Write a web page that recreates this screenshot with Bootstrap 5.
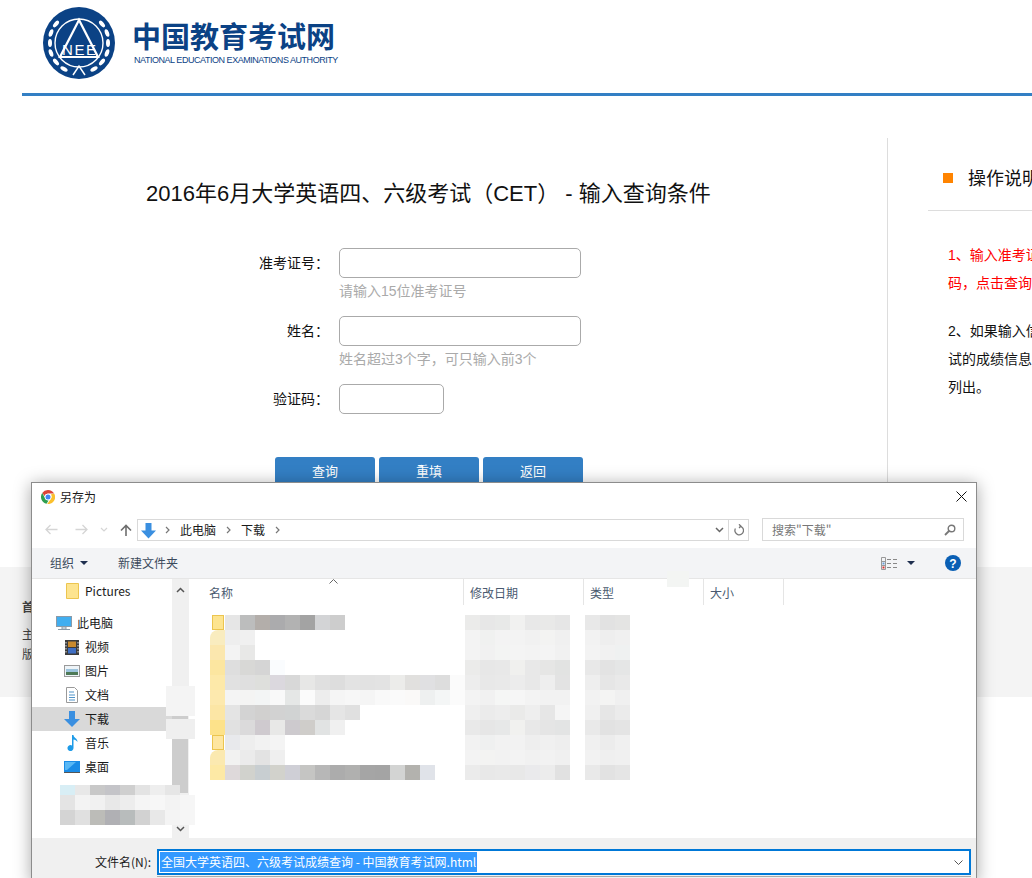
<!DOCTYPE html>
<html lang="zh-CN">
<head>
  <meta charset="UTF-8" />
  <title>全国大学英语四、六级考试成绩查询 - 中国教育考试网</title>
  <link href="https://cdn.jsdelivr.net/npm/bootstrap@5.3.3/dist/css/bootstrap.min.css" rel="stylesheet"/>
  <style>
    html, body { height: 878px; overflow: hidden; }
    body { position: relative; background: #fff; color: #111; font-family: "Liberation Sans", "Noto Sans CJK SC", sans-serif; font-size: 14px; }

    /* page behind the dialog */
    .site-head { height: 96px; margin-left: 22px; border-bottom: 3px solid #337fc4; }
    .site-logo { margin-left: 20px; padding-top: 7px; }
    .site-name { margin-left: 14px; padding-top: 20px; color: #0b4285; }
    .site-cn { font-size: 29px; line-height: 36px; font-weight: 700; white-space: nowrap; }
    .site-en { font-size: 9px; line-height: 12px; margin: -2px 0 0 2px; white-space: nowrap; letter-spacing: -.46px; }
    .site-main { margin: 42px 0 0 22px; height: 429px; }
    .query-col { width: 865px; flex: none; }
    .query-title { font-size: 22px; line-height: 32px; font-weight: 400; margin: 40px 0 38px 124px; white-space: nowrap; color: #111; }
    .query-row { height: 68px; }
    .query-label { width: 307px; flex: none; text-align: right; margin-right: 10px; line-height: 30px; }
    .query-input { display: block; width: 242px; height: 30px; border: 1px solid #aaa; border-radius: 5px; background: #fff; }
    .query-input-sm { width: 105px; }
    .query-help { color: #aaa; line-height: 20px; margin-top: 3px; white-space: nowrap; }
    .query-btns { margin: 5px 0 0 253px; gap: 4px; }
    .query-btn { width: 100px; height: 30px; padding: 0; background: #337fc4; color: #fff; border: 0; border-radius: 3px; font-size: 13px; }
    .query-btn:hover { background: #337fc4; color: #fff; }
    .help-col { width: 145px; flex: none; border-left: 1px solid #ddd; padding-left: 40px; overflow: hidden; white-space: nowrap; }
    .help-head { height: 73px; border-bottom: 1px solid #ddd; padding: 28px 0 0 15px; font-size: 18px; line-height: 26px; gap: 15px; }
    .help-mark { width: 10px; height: 10px; background: #ff8400; flex: none; margin-top: 7px; }
    .help-text { margin: 30px 0 0 20px; font-size: 14px; line-height: 28px; }
    .help-red { color: #f00; margin-bottom: 20px; }
    .site-foot { position: absolute; left: 0; right: 0; top: 567px; height: 130px; background: #f4f4f4; padding: 31px 0 0 22px; font-size: 12px; color: #444; }
    .site-foot div { line-height: 20px; }
    .foot-head { margin-bottom: 7px; }

    /* save as dialog */
    .save-dlg { position: absolute; left: 31px; top: 482px; width: 946px; height: 400px; background: #fff; border: 1px solid #8c8c8c; box-shadow: 0 2px 16px rgba(0,0,0,.35); font-family: "Noto Sans CJK SC", "Liberation Sans", sans-serif; font-size: 12px; color: #1a1a1a; }
    .dlg-title { height: 29px; padding: 0 9px 2px; gap: 5px; }
    .dlg-close { margin-left: auto; }
    .dlg-nav { height: 36px; padding: 6px 14px 7px 13px; }
    .dlg-arrows { width: 92px; height: 23px; flex: none; gap: 12px; }
    .nav-fwd { margin-left: 5px; }
    .dlg-addr { width: 612px; height: 22px; margin-top: 1px; border: 1px solid #d9d9d9; flex: none; gap: 10px; padding-left: 2px; }
    .addr-first { margin-left: -2px; }
    .dlg-addr-end { margin-left: auto; height: 100%; }
    .dlg-refresh { width: 20px; height: 100%; border-left: 1px solid #d9d9d9; }
    .dlg-search { width: 202px; height: 23px; margin-left: 13px; border: 1px solid #d9d9d9; padding: 0 7px 0 9px; color: #777; flex: none; }
    .dlg-tools { height: 31px; background: #f3f4f6; padding: 0 15px 0 18px; border-bottom: 1px solid #e6e6e6; color: #3b4a5c; }
    .tool-caret { margin-left: 6px; }
    .tool-new { margin-left: 30px; }
    .tool-view { margin-left: auto; }
    .tool-caret-end { margin: 0 30px 0 9px; }
    .dlg-body { height: 259px; }
    .dlg-side { width: 140px; flex: none; white-space: nowrap; }
    .side-item { height: 24px; gap: 5px; padding-left: 32px; }
    .side-first { margin-bottom: 8px; }
    .side-top { padding-left: 24px; }
    .side-on { background: #d9d9d9; }
    .side-ico { width: 16px; flex: none; display: flex; justify-content: center; }
    .dlg-scroll { width: 16px; flex: none; background: #f0f0f0; }
    .scroll-btn { height: 22px; }
    .scroll-btn-end { height: 18px; }
    .scroll-fill { flex: 1; }
    .scroll-gap { height: 27px; }
    .scroll-thumb { height: 80px; background: #cdcdcd; }
    .dlg-list { flex: 1; border-left: 1px solid #f0f0f0; min-width: 0; }
    .list-head { height: 26px; color: #4a5a70; }
    .list-col { height: 100%; border-right: 1px solid #e5e5e5; padding-left: 6px; line-height: 28px; flex: none; }
    .list-name { width: 275px; padding-left: 20px; }
    .list-w { width: 120px; }
    .list-w2 { width: 80px; }
    .list-sort { position: absolute; top: 0; left: 140px; }
    .list-rows { margin: 10px 0 0 21px; }
    .blur-row { height: 15px; }
    .blur-ico { width: 15px; flex: none; }
    .blur-name { width: 240px; flex: none; }
    .blur-date { width: 105px; flex: none; margin-right: 15px; }
    .blur-cell { width: 15px; height: 15px; flex: none; }
    .blur-folder { width: 12px; margin-left: 2px; border: 1px solid #ecc54f; }
    .blur-round { border-top-left-radius: 8px; }
    .dlg-bottom { height: 45px; background: #f0f0f0; padding: 11px 5px 0 63px; }
    .file-label { width: 62px; flex: none; line-height: 26px; }
    .file-box { flex: 1; height: 26px; border: 2px solid #0078d7; background: #fff; padding: 0 2px 0 1px; }
    .file-sel { background: #3399ff; color: #fff; padding: 0 1px; line-height: 20px; white-space: nowrap; }
    .file-next { height: 1px; margin: 1px 0 0 62px; background: #aaa; }
    .smudge { position: absolute; background: #f4f4f4; }
    .smudge-a { left: 134px; top: 203px; width: 29px; height: 30px; }
    .smudge-b { left: 134px; top: 236px; width: 29px; height: 20px; background: #efefef; }
    .smudge-c { left: 635px; top: 88px; width: 22px; height: 16px; background: #f3f5f3; }
    .side-blur { position: absolute; left: 28px; top: 302px; }
    .side-blur .blur-row:first-child { height: 10px; overflow: hidden; }
  </style>
</head>
<body>
  <header class="site-head d-flex">
    <div class="site-logo">
      <svg width="76" height="74" viewBox="0 0 76 74">
        <circle cx="37" cy="36" r="36" fill="#0b4285"/>
        <circle cx="37" cy="36" r="24" fill="none" stroke="#fff" stroke-width="1.4"/>
        <path d="M37 13 L18 50 H56 Z" fill="#0b4285" stroke="#fff" stroke-width="2.2"/>
        <text x="37" y="48" text-anchor="middle" fill="#fff" font-family="Liberation Sans" font-size="15" textLength="34">NEE</text>
        <path d="M31 68 L37 59 L43 68" fill="none" stroke="#fff" stroke-width="1.5"/>
        <g fill="#fff">
          <ellipse cx="8" cy="36" rx="2" ry="4"/><ellipse cx="9" cy="26" rx="2" ry="4" transform="rotate(20 9 26)"/><ellipse cx="14" cy="17" rx="2" ry="4" transform="rotate(40 14 17)"/>
          <ellipse cx="9" cy="46" rx="2" ry="4" transform="rotate(-20 9 46)"/><ellipse cx="14" cy="55" rx="2" ry="4" transform="rotate(-40 14 55)"/><ellipse cx="22" cy="62" rx="2" ry="4" transform="rotate(-60 22 62)"/>
          <ellipse cx="66" cy="36" rx="2" ry="4"/><ellipse cx="65" cy="26" rx="2" ry="4" transform="rotate(-20 65 26)"/><ellipse cx="60" cy="17" rx="2" ry="4" transform="rotate(-40 60 17)"/>
          <ellipse cx="65" cy="46" rx="2" ry="4" transform="rotate(20 65 46)"/><ellipse cx="60" cy="55" rx="2" ry="4" transform="rotate(40 60 55)"/><ellipse cx="52" cy="62" rx="2" ry="4" transform="rotate(60 52 62)"/>
        </g>
      </svg>
    </div>
    <div class="site-name">
      <div class="site-cn">中国教育考试网</div>
      <div class="site-en">NATIONAL EDUCATION EXAMINATIONS AUTHORITY</div>
    </div>
  </header>

  <main class="site-main d-flex">
    <section class="query-col">
      <h1 class="query-title">2016年6月大学英语四、六级考试（CET） - 输入查询条件</h1>
      <form>
        <div class="query-row d-flex">
          <label class="query-label">准考证号：</label>
          <div><input class="query-input" type="text"/><div class="query-help">请输入15位准考证号</div></div>
        </div>
        <div class="query-row d-flex">
          <label class="query-label">姓名：</label>
          <div><input class="query-input" type="text"/><div class="query-help">姓名超过3个字，可只输入前3个</div></div>
        </div>
        <div class="query-row d-flex">
          <label class="query-label">验证码：</label>
          <div><input class="query-input query-input-sm" type="text"/></div>
        </div>
        <div class="query-btns d-flex">
          <button type="button" class="btn query-btn">查询</button>
          <button type="button" class="btn query-btn">重填</button>
          <button type="button" class="btn query-btn">返回</button>
        </div>
      </form>
    </section>
    <aside class="help-col">
      <div class="help-head d-flex"><span class="help-mark"></span><span>操作说明</span></div>
      <div class="help-text">
        <div class="help-red">1、输入准考证<br/>码，点击查询</div>
        <div>2、如果输入信<br/>试的成绩信息<br/>列出。</div>
      </div>
    </aside>
  </main>

  <footer class="site-foot">
    <div class="fw-bold foot-head">首</div>
    <div>主</div>
    <div>版</div>
  </footer>

  <div class="save-dlg">
    <div class="dlg-title d-flex align-items-center">
      <svg width="14" height="14" viewBox="0 0 14 14">
        <path d="M7 0a7 7 0 0 1 6.100 3.500H7A3.500 3.500 0 0 0 3.600 6L1.200 3A7 7 0 0 1 7 0z" fill="#db4437"/>
        <path d="M1.200 3L4 7.900a3.500 3.500 0 0 0 3.600 2.500L5.500 13.800A7 7 0 0 1 1.200 3z" fill="#2e9e4f"/>
        <path d="M13.100 3.500A7 7 0 0 1 6.200 14L9.900 8.800A3.500 3.500 0 0 0 9.800 4.500z" fill="#fbc02d"/>
        <circle cx="7" cy="7" r="3.300" fill="#fff"/><circle cx="7" cy="7" r="2.500" fill="#4285f4"/>
      </svg>
      <span>另存为</span>
      <svg class="dlg-close" width="11" height="11" viewBox="0 0 11 11"><path d="M.5.500l10 10M10.500.5l-10 10" stroke="#111" stroke-width="1" fill="none"/></svg>
    </div>

    <div class="dlg-nav d-flex align-items-start">
      <div class="dlg-arrows d-flex align-items-center">
        <svg width="13" height="11" viewBox="0 0 13 11"><path d="M12.500 5.500H1M5.500 1L1 5.500l4.500 4.500" stroke="#d5d5d5" stroke-width="1.300" fill="none"/></svg>
        <svg width="13" height="11" viewBox="0 0 13 11" class="nav-fwd"><path d="M.5 5.500H12M7.500 1L12 5.500 7.500 10" stroke="#d5d5d5" stroke-width="1.300" fill="none"/></svg>
        <svg width="8" height="5" viewBox="0 0 8 5"><path d="M1 1l3 3 3-3" stroke="#d5d5d5" stroke-width="1.200" fill="none"/></svg>
        <svg width="12" height="12" viewBox="0 0 12 12"><path d="M6 12V1.500M1 6.500l5-5 5 5" stroke="#6e6e6e" stroke-width="1.600" fill="none"/></svg>
      </div>
      <div class="dlg-addr d-flex align-items-center">
        <svg width="17" height="17" viewBox="0 0 17 17"><path d="M5.500 1h6v7.500H16L8.500 16.500 1 8.500h4.500z" fill="#3a8fe0"/></svg>
        <svg width="5" height="8" viewBox="0 0 5 8" class="addr-first"><path d="M1 1l3 3-3 3" stroke="#777" stroke-width="1.200" fill="none"/></svg>
        <span>此电脑</span>
        <svg width="5" height="8" viewBox="0 0 5 8"><path d="M1 1l3 3-3 3" stroke="#777" stroke-width="1.200" fill="none"/></svg>
        <span>下载</span>
        <svg width="5" height="8" viewBox="0 0 5 8"><path d="M1 1l3 3-3 3" stroke="#777" stroke-width="1.200" fill="none"/></svg>
        <div class="dlg-addr-end d-flex align-items-center">
          <svg width="9" height="6" viewBox="0 0 9 6" class="me-1"><path d="M1 1l3.500 3.500L8 1" stroke="#666" stroke-width="1.500" fill="none"/></svg>
          <div class="dlg-refresh d-flex align-items-center justify-content-center">
            <svg width="11" height="12" viewBox="0 0 11 12"><path d="M6.500 2.200A4.300 4.300 0 1 1 2.400 4.500M6 .3L8 2.300 6 4" stroke="#777" stroke-width="1.300" fill="none"/></svg>
          </div>
        </div>
      </div>
      <div class="dlg-search d-flex align-items-center justify-content-between">
        <span>搜索"下载"</span>
        <svg width="12" height="12" viewBox="0 0 12 12"><circle cx="7.500" cy="4.500" r="3.300" stroke="#777" stroke-width="1.400" fill="none"/><path d="M5 7L1 11" stroke="#777" stroke-width="1.800"/></svg>
      </div>
    </div>

    <div class="dlg-tools d-flex align-items-center">
      <span>组织</span>
      <svg width="8" height="4" viewBox="0 0 8 4" class="tool-caret"><path d="M0 0h8L4 4z" fill="#1f2f4f"/></svg>
      <span class="tool-new">新建文件夹</span>
      <svg width="17" height="13" viewBox="0 0 17 13" class="tool-view"><path d="M.5.500h4v12h-4zM.5 4.500h4M.5 8.500h4" stroke="#999" fill="none"/><path d="M6 2.500h4M12 2.500h4M6 6.500h4M12 6.500h4M6 10.500h4M12 10.500h4" stroke="#888"/><rect x="1.500" y="9.500" width="2" height="2" fill="#d33"/><rect x="1.500" y="5.500" width="2" height="2" fill="#6b9ed8"/></svg>
      <svg width="8" height="4" viewBox="0 0 8 4" class="tool-caret-end"><path d="M0 0h8L4 4z" fill="#1f2f4f"/></svg>
      <svg width="16" height="16" viewBox="0 0 16 16"><circle cx="8" cy="8" r="8" fill="#0a5fb4"/><text x="8" y="12.500" text-anchor="middle" fill="#fff" font-family="Liberation Sans" font-size="12" font-weight="700">?</text></svg>
    </div>

    <div class="dlg-body d-flex">
      <nav class="dlg-side">
        <div class="side-item side-first d-flex align-items-center">
          <span class="side-ico"><svg width="13" height="16" viewBox="0 0 13 16"><path d="M.5.500h12v15H.5z" fill="#fde48f" stroke="#ecc54f"/></svg></span><span>Pictures</span>
        </div>
        <div class="side-item side-top d-flex align-items-center">
          <span class="side-ico"><svg width="16" height="15" viewBox="0 0 16 15"><rect x=".5" y=".5" width="15" height="10" fill="#41aef0" stroke="#8a9aa8"/><path d="M6 11h4v2H6zM2 13.500h12" stroke="#8a9aa8" fill="none"/></svg></span><span>此电脑</span>
        </div>
        <div class="side-item d-flex align-items-center">
          <span class="side-ico"><svg width="14" height="15" viewBox="0 0 14 15"><rect width="14" height="15" fill="#3c3c3c"/><rect x="3" y="1.500" width="8" height="5.500" fill="#c98a2e"/><rect x="3" y="8" width="8" height="5.500" fill="#3f6fc4"/><path d="M1 2v11M13 2v11" stroke="#ddd" stroke-dasharray="1.500 1.500"/></svg></span><span>视频</span>
        </div>
        <div class="side-item d-flex align-items-center">
          <span class="side-ico"><svg width="16" height="12" viewBox="0 0 16 12"><rect x=".5" y=".5" width="15" height="11" fill="#eef4f8" stroke="#9a9a9a"/><path d="M2 4h12v3H2z" fill="#9cc4dd"/><path d="M2 7h12v3H2z" fill="#4e7a57"/></svg></span><span>图片</span>
        </div>
        <div class="side-item d-flex align-items-center">
          <span class="side-ico"><svg width="12" height="16" viewBox="0 0 12 16"><path d="M.5.500h8l3 3v12H.5z" fill="#fff" stroke="#9a9a9a"/><path d="M3 5h5M3 8h6M3 10.500h6M3 13h6" stroke="#4f93c9"/></svg></span><span>文档</span>
        </div>
        <div class="side-item side-on d-flex align-items-center">
          <span class="side-ico"><svg width="16" height="16" viewBox="0 0 16 16"><path d="M5 0h6v8h5l-8 8-8-8h5z" fill="#3a8fe0"/></svg></span><span>下载</span>
        </div>
        <div class="side-item d-flex align-items-center">
          <span class="side-ico"><svg width="12" height="16" viewBox="0 0 12 16"><path d="M6 0h1.500c0 3 4 3 4 7-1-1.500-2.500-2.500-4-2.500V13a3 3 0 1 1-1.500-2.500z" fill="#1e9be8"/></svg></span><span>音乐</span>
        </div>
        <div class="side-item d-flex align-items-center">
          <span class="side-ico"><svg width="16" height="12" viewBox="0 0 16 12"><rect width="16" height="12" fill="#1b8ce6"/><path d="M1 1h11L3 9H1z" fill="#59b8f5"/><path d="M0 11h16v1H0z" fill="#555"/></svg></span><span>桌面</span>
        </div>
      </nav>
      <div class="dlg-scroll d-flex flex-column">
        <div class="scroll-btn d-flex align-items-center justify-content-center"><svg width="9" height="6" viewBox="0 0 9 6"><path d="M1 5l3.500-3.500L8 5" stroke="#555" stroke-width="1.500" fill="none"/></svg></div>
        <div class="scroll-fill"></div>
        <div class="scroll-thumb"></div>
        <div class="scroll-gap"></div>
        <div class="scroll-btn-end d-flex align-items-center justify-content-center"><svg width="9" height="6" viewBox="0 0 9 6"><path d="M1 1l3.500 3.500L8 1" stroke="#555" stroke-width="1.500" fill="none"/></svg></div>
      </div>
      <div class="dlg-list position-relative">
        <div class="list-head d-flex">
          <div class="list-col list-name">名称</div>
          <div class="list-col list-w">修改日期</div>
          <div class="list-col list-w">类型</div>
          <div class="list-col list-w2">大小</div>
        </div>
        <svg width="9" height="5" viewBox="0 0 9 5" class="list-sort"><path d="M.5 4.500L4.500 .5l4 4" stroke="#666" fill="none"/></svg>
        <div class="list-rows" id="blurRows"></div>
      </div>
    </div>

    <div class="dlg-bottom">
      <div class="d-flex">
        <div class="file-label">文件名(N):</div>
        <div class="file-box d-flex align-items-center justify-content-between">
          <span class="file-sel">全国大学英语四、六级考试成绩查询 - 中国教育考试网.html</span>
          <svg width="9" height="5" viewBox="0 0 9 5" class="me-1"><path d="M.5.500l4 4 4-4" stroke="#555" fill="none"/></svg>
        </div>
      </div>
      <div class="file-next"></div>
    </div>

    <div class="smudge smudge-a"></div>
    <div class="smudge smudge-b"></div>
    <div class="smudge smudge-c"></div>
    <div class="side-blur" id="sideBlur"></div>
  </div>

  <script>
    // mosaic that hides the file names, one 15px cell per colour
    const names = [
      'e6e6e6 bcbdbd b3aeaa ababad b2b2b2 a3a3a3 d3d4d6 cdcdcd',
      'eeeeee f0f0f0',
      'f3f3f3 e8e8e7',
      'dedede d8d8d6 d5d5d5 fafcfe',
      'e1e1e1 dfdfdf dedfdc dbd8de d8d8d8 e7e7e6 e0e0e0 dddddd e3e3e3 e2e2e2 e3e3e3 ececea e1e0de e0e0e2 dddddd fbfbfb',
      'f4f4f4 f4f4f3 f3f5f5 f9f9f9 e5e7e6 fbfbfb ededed f5f5f5 f7f7f7 f5f5f5 f9f9f9 fafafa faf9f8 eef0f0 f4f6f6 fbfbfb',
      'e4e4e4 d3d3d3 d1d0cf d2d2d2 d1d3d3 dadada d6d6d6 e5e5e5 e0e0e0',
      'e1e1e1 dbdadb cfcacf e8e8e7 cdcace cfcdca e1e3e3 f0f0f0',
      'e8e9ec eeeeee f2f2f2 f4f4f4',
      'f2f2f1 ebebeb e3e3e3 efefef',
      'ded9da d1d2cd c8ced1 d2d2cc cfcfd6 c5c5c3 b7b7b7 acacac b0b0af a5a5a5 a4a4a4 d3d4d3 b3b2ae e0e3e9'
    ];
    const dates = [
      'ebebea e7e7e7 e8e9e8 f1f1f0 e8e8e8 e9e9e8 e6e6e6',
      'f3f3f3 f0f1f0 f3f3f3 f3f3f3 f1f1f1 f3f3f2 f0f0f0',
      'f3f3f3 f1f1f1 f3f4f3 f4f4f4 f3f3f3 f4f4f4 f1f1f1',
      'ebebea e7e7e7 e8e8e8 f0f0ee e8e8e8 e6e6e5 e2e3e2',
      'ededed e8e8e8 e9e9e9 ececec e8e8e8 eeeeee e3e3e3',
      'f3f3f3 f1f1f1 f5f6f5 f6f6f6 f3f3f3 f2f2f2 f2f2f2',
      'efefef ebebeb ededed eaeae9 eeeeee e6e6e6 f5f5f5',
      'e9e9e9 e6e6e6 e7e8e8 f1f1ef e8e8e8 e5e5e5 e3e4e4',
      'f2f2f2 eff0f0 f2f2f2 f2f2f2 eeeeee f0f0f0 eeeeee',
      'f3f3f3 f3f3f2 f2f2f2 f3f3f3 f1f1f1 f2f2f2 f0f0f0',
      'ebebeb e8e8e8 e9e9e9 e8e8e8 eaeaec ececec e1e1e1'
    ];
    const types = [
      'e8e8e8 e2e2e2 e4e4e3', 'f2f2f2 eeeeee f0f0f0', 'f3f3f3 f1f1f1 eff1f1', 'e8e8e8 e3e3e3 e5e6e6',
      'eeeeee e6e6e6 e9e9e9', 'f2f2f2 f4f4f3 f0f0f0', 'f0f0f0 e6e6e6 ebebeb', 'e9e9e9 e2e2e2 e4e4e4',
      'f0f0f0 ececec f0f0f0', 'f2f2f2 efefef f0f0f0', 'e9e9e9 e2e2e2 e5e5e5'
    ];
    const icons = ['fde48f', 'f9ecbf', 'fbe7ae', 'fce6a0', 'fde9a9', 'fde9ae', 'fce6a5', 'fde28a', 'fee6a0', 'fbe9b0', 'fde9a5'];
    const side = [
      'd8eef5 e8e8e8 c8c8c8 c4c4c8 cfcfcf e3e3e3 eeeeee e6e6e6',
      'e4e4e4 f3f3f3 f1f1f1 e8e8e8 ededed f5f5f5 f7f7f7 f3f3f3 f6f6f6',
      'd4d4d4 e0e0e0 bcbcb8 b0b0b4 b8bcbc d2d2d2 e8e8e8 f4f4f4 f6f6f6'
    ];

    function cells(parent, list) {
      list.split(' ').forEach(c => {
        const d = document.createElement('div');
        d.className = 'blur-cell';
        d.style.background = '#' + c;
        parent.appendChild(d);
      });
    }
    function group(row, cls, list) {
      const g = document.createElement('div');
      g.className = cls + ' d-flex';
      cells(g, list);
      row.appendChild(g);
    }

    const rows = document.getElementById('blurRows');
    names.forEach((n, i) => {
      const row = document.createElement('div');
      row.className = 'blur-row d-flex';
      group(row, 'blur-ico', icons[i]);
      group(row, 'blur-name', n);
      group(row, 'blur-date', dates[i]);
      group(row, 'blur-type', types[i]);
      const ico = row.firstChild.firstChild;
      if (i === 0 || i === 8) ico.classList.add('blur-folder');
      if (i === 1 || i === 9) ico.classList.add('blur-round');
      rows.appendChild(row);
    });

    const sb = document.getElementById('sideBlur');
    side.forEach(s => {
      const row = document.createElement('div');
      row.className = 'blur-row d-flex';
      cells(row, s);
      sb.appendChild(row);
    });
  </script>
  <script src="https://cdn.jsdelivr.net/npm/bootstrap@5.3.3/dist/js/bootstrap.bundle.min.js"></script>
</body>
</html>
